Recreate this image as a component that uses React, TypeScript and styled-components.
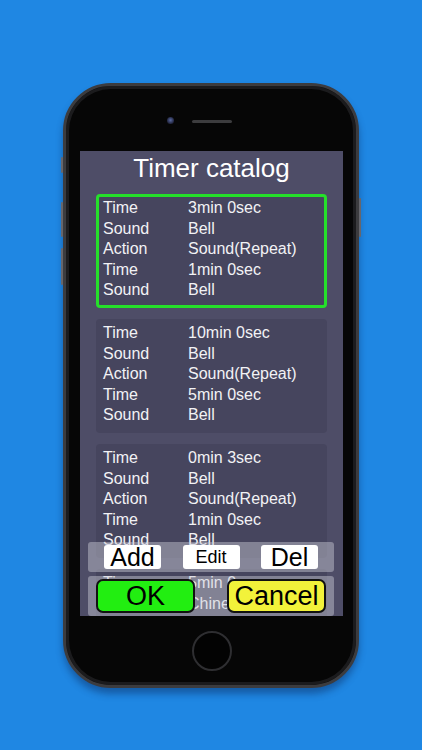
import styled, { createGlobalStyle } from "styled-components";

const GlobalStyle = createGlobalStyle`
  html, body {
    margin: 0;
    padding: 0;
    background: #1f87e3;
  }
  body {
    font-family: "Liberation Sans", Arial, sans-serif;
  }
`;

const Page = styled.div`
  width: 422px;
  height: 750px;
  background: #1f87e3;
  display: flex;
  justify-content: center;
  padding-top: 83px;
  box-sizing: border-box;
  overflow: hidden;
`;

const Phone = styled.div`
  position: relative;
  width: 296px;
  height: 605px;
  box-sizing: border-box;
  border-radius: 48px;
  border: 3px solid #3c3c3f;
  background: #060606;
  box-shadow: inset 0 0 0 3px #1b1b1d, 0 6px 7px rgba(10, 40, 90, 0.45);
  display: flex;
  flex-direction: column;
  align-items: center;
`;

const SideKey = styled.div<{ $side: "left" | "right"; $top: number; $h: number }>`
  position: absolute;
  ${(p) => (p.$side === "left" ? "left: -5px;" : "right: -5px;")}
  top: ${(p) => p.$top}px;
  height: ${(p) => p.$h}px;
  width: 2px;
  border-radius: 1px;
  background: #66666c;
`;

const TopBezel = styled.div`
  height: 65px;
  width: 100%;
  display: flex;
  align-items: center;
  justify-content: center;
  gap: 18px;
  box-sizing: border-box;
`;

const Camera = styled.div`
  width: 7px;
  height: 7px;
  border-radius: 50%;
  background: radial-gradient(circle at 50% 45%, #5a6aa0 0, #2a3050 55%, #15161c 100%);
  margin-left: -24px;
  margin-top: 4px;
`;

const Speaker = styled.div`
  width: 40px;
  height: 3px;
  border-radius: 2px;
  background: #3c3c3e;
  margin-top: 5px;
`;

const Screen = styled.div`
  position: relative;
  width: 263px;
  height: 465px;
  margin-left: 1px;
  background: #4e4d67;
  overflow: hidden;
`;

const Title = styled.h1`
  margin: 2px 0 11px;
  font-size: 26px;
  line-height: 30px;
  font-weight: normal;
  color: #ffffff;
  text-align: center;
`;

const List = styled.div`
  display: flex;
  flex-direction: column;
  gap: 11px;
  padding: 0 16px;
`;

const Card = styled.div<{ $selected?: boolean }>`
  box-sizing: border-box;
  height: 114px;
  border: 3px solid ${(p) => (p.$selected ? "#25e02a" : "transparent")};
  border-radius: 4px;
  background: #46455e;
  padding: 1px 4px 0 4px;
`;

const Row = styled.div`
  display: flex;
  font-size: 16px;
  line-height: 20.5px;
  color: #f2f2f5;
  white-space: nowrap;
`;

const Label = styled.span`
  width: 85px;
  flex: none;
`;

const Footer = styled.div`
  position: absolute;
  left: 8px;
  right: 9px;
  bottom: 0;
  display: flex;
  flex-direction: column;
  gap: 4px;
`;

const Bar = styled.div<{ $h: number; $pad: number }>`
  height: ${(p) => p.$h}px;
  display: flex;
  align-items: center;
  justify-content: space-between;
  padding: 0 ${(p) => p.$pad}px;
  border-radius: 3px;
  background: rgba(205, 205, 215, 0.45);
`;

const SmallButton = styled.button<{ $size: number }>`
  width: 57px;
  height: 24px;
  border: none;
  border-radius: 3px;
  background: #ffffff;
  color: #000;
  padding: 0;
  font-family: "Liberation Sans", Arial, sans-serif;
  font-size: ${(p) => p.$size}px;
  line-height: 24px;
`;

const BigButton = styled.button<{ $bg: string }>`
  width: 99px;
  height: 34px;
  box-sizing: border-box;
  border: 2px solid #111;
  border-radius: 7px;
  background: ${(p) => p.$bg};
  color: #000;
  padding: 0;
  font-family: "Liberation Sans", Arial, sans-serif;
  font-size: 27px;
  line-height: 30px;
`;

const BottomBezel = styled.div`
  flex: 1;
  display: flex;
  align-items: center;
  justify-content: center;
`;

const HomeButton = styled.div`
  width: 36px;
  height: 36px;
  border-radius: 50%;
  border: 2px solid #2e2e31;
  background: #030303;
  margin-left: 2px;
`;

type Timer = { rows: [string, string][]; selected?: boolean };

const timers: Timer[] = [
  {
    selected: true,
    rows: [
      ["Time", "3min 0sec"],
      ["Sound", "Bell"],
      ["Action", "Sound(Repeat)"],
      ["Time", "1min 0sec"],
      ["Sound", "Bell"],
    ],
  },
  {
    rows: [
      ["Time", "10min 0sec"],
      ["Sound", "Bell"],
      ["Action", "Sound(Repeat)"],
      ["Time", "5min 0sec"],
      ["Sound", "Bell"],
    ],
  },
  {
    rows: [
      ["Time", "0min 3sec"],
      ["Sound", "Bell"],
      ["Action", "Sound(Repeat)"],
      ["Time", "1min 0sec"],
      ["Sound", "Bell"],
    ],
  },
  {
    rows: [
      ["Time", "5min 0sec"],
      ["Sound", "Chinese gong"],
      ["Action", "Sound(Repeat)"],
      ["Time", "1min 0sec"],
      ["Sound", "Bell"],
    ],
  },
];

export default function App() {
  return (
    <>
      <GlobalStyle />
      <Page>
        <Phone>
          <SideKey $side="left" $top={71} $h={16} />
          <SideKey $side="left" $top={116} $h={35} />
          <SideKey $side="left" $top={162} $h={37} />
          <SideKey $side="right" $top={112} $h={39} />
          <TopBezel>
            <Camera />
            <Speaker />
          </TopBezel>
          <Screen>
            <Title>Timer catalog</Title>
            <List>
              {timers.map((t, i) => (
                <Card key={i} $selected={t.selected}>
                  {t.rows.map(([k, v], j) => (
                    <Row key={j}>
                      <Label>{k}</Label>
                      <span>{v}</span>
                    </Row>
                  ))}
                </Card>
              ))}
            </List>
            <Footer>
              <Bar $h={30} $pad={16}>
                <SmallButton $size={25}>Add</SmallButton>
                <SmallButton $size={18}>Edit</SmallButton>
                <SmallButton $size={25}>Del</SmallButton>
              </Bar>
              <Bar $h={40} $pad={8}>
                <BigButton $bg="#22ee11">OK</BigButton>
                <BigButton $bg="#f2f23a">Cancel</BigButton>
              </Bar>
            </Footer>
          </Screen>
          <BottomBezel>
            <HomeButton />
          </BottomBezel>
        </Phone>
      </Page>
    </>
  );
}
